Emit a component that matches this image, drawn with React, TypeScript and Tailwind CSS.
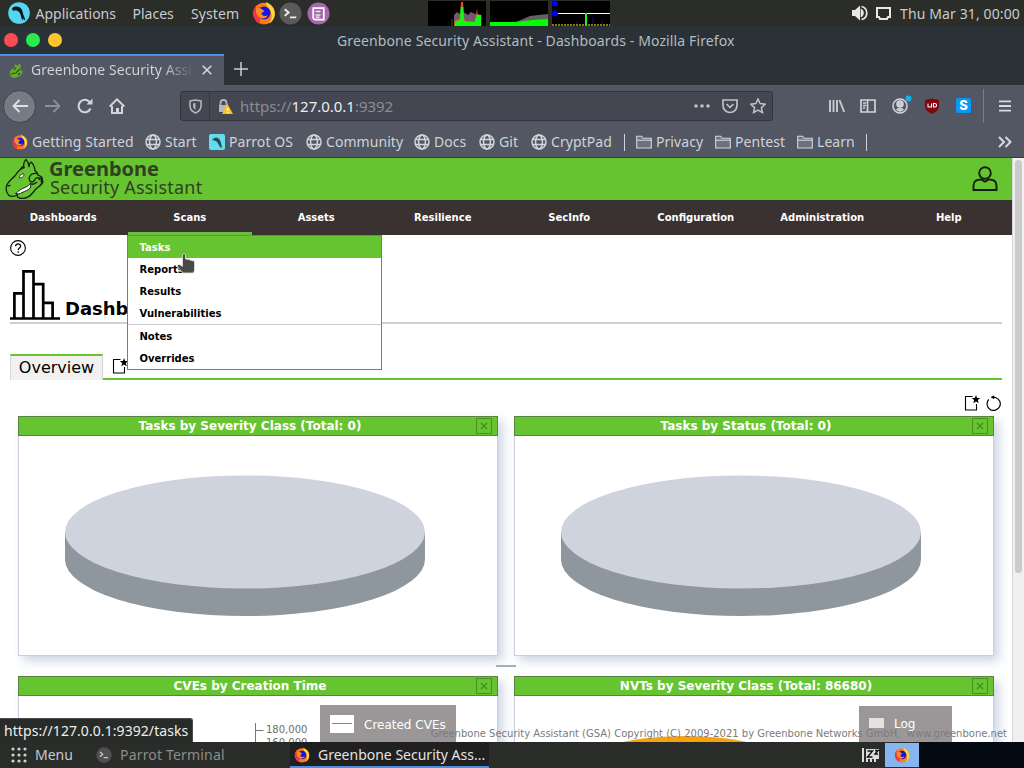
import React from "react";

type P = { className?: string };

const Firefox = ({ className }: P) => (
  <svg viewBox="0 0 24 24" className={className}>
    <circle cx="12" cy="12.500" r="10.800" fill="#ff7a1a" />
    <path d="M12 23.300A10.800 10.800 0 0 1 1.400 11c.3-3 1.300-5 2.600-6.300L4.600 8 8 5.500 8 22z" fill="#f4304a" />
    <path d="M14 1c5 2.500 9 6 8.800 12.500-.4 4-2.300 7.300-6 9 3-4 3.500-7 2.200-11-1-4-5-6-5-10.500z" fill="#ffd83a" />
    <circle cx="12" cy="12" r="6.500" fill="#1414e0" />
    <path d="M4.500 6.500 9 7.500l3.500 2.800-3 1.700c0 3 4 4 6.500 2-1.500 4.500-8.500 5-10.800 0C3.500 11.500 3.700 8.500 4.500 6.500z" fill="#ff8a1c" />
  </svg>
);

const Terminal = ({ className }: P) => (
  <svg viewBox="0 0 24 24" className={className}>
    <circle cx="12" cy="12" r="11.500" fill="#5a5a5a" />
    <path d="M6 7.500 10 11l-4 3.500M11.500 16H18" fill="none" stroke="#eee" strokeWidth="2" />
  </svg>
);

const Globe = ({ className }: P) => (
  <svg viewBox="0 0 16 16" className={className} fill="none" stroke="#d3d5da" strokeWidth="1.500">
    <circle cx="8" cy="8" r="7" />
    <ellipse cx="8" cy="8" rx="3.400" ry="7" />
    <path d="M1.500 5.500h13M1.500 10.500h13" />
  </svg>
);

const Folder = ({ className }: P) => (
  <svg viewBox="0 0 16 16" className={className} fill="none" stroke="#d3d5da" strokeWidth="1.100">
    <path d="M.7 14V2.200h5l1.300 2h8.300V14z" fill="#6c717c" />
    <path d="M.7 6.200h14.600" />
  </svg>
);

const NewDisplay = ({ className }: P) => (
  <svg viewBox="0 0 17 16" className={className} fill="none" stroke="#000" strokeWidth="1.100">
    <path d="M8.500 1.500H1.500v13.500h11V9" />
    <path d="M12 0l1.100 3 3.200.1-2.500 2 .9 3.100L12 6.400 9.300 8.200l.9-3.100-2.500-2 3.200-.1z" fill="#000" stroke="none" />
  </svg>
);

const Dragon = ({ className }: P) => (
  <svg viewBox="0 0 120 126" className={className} fill="none" stroke="#15230f" strokeWidth="4" strokeLinejoin="round" strokeLinecap="round">
    <path d="M57 29c-3-10 0-18 6-25 5 6 8 12 9 22M72 26c0-7 2-11 6-14 8 6 11 16 12 26 6 4 9 8 10 14" />
    <path d="M57 29c-12 4-20 14-25 22C22 62 9 72 5 82c-3 10-1 22 6 30 8 4 18 4 26-2" />
    <path d="M47 32l6-6M9 84l6-2" />
    <path d="M100 52c8 2 14 8 12 18-1 12-10 15-17 21-9 8-14 19-24 25-9 5-22 7-32 2-3-3-3-7-2-10" />
    <path d="M97 47c-10-2-20 2-24 11-2 8 2 13 8 14 7 0 7-9 13-12 5-2 9 1 10 5M104 60l6 2-2 8 6 2-6 8M76 77c8 4 13 2 19-4" />
    <path d="M33 106c8-10 17-13 28-18 7-3 12-8 16-12 1 6 0 10-1 14-6 7-16 9-25 14-6 3-12 6-18 2z" fill="#fff" strokeWidth="3" />
    <path d="M43 58c2-7 6-11 13-11 2 7-2 12-11 13z" fill="#fff" strokeWidth="2.500" />
  </svg>
);

const Pie = () => (
  <svg viewBox="0 0 478 219" className="block h-[219px] w-full">
    <path d="M46 97v26.500a180 56.500 0 0 0 360 0V97z" fill="#8e979d" />
    <ellipse cx="226" cy="96" rx="180" ry="56.500" fill="#ced3de" />
  </svg>
);

const Panel = ({ title, children }: { title: string; children?: React.ReactNode }) => (
  <div className="flex h-[240px] w-[480px] flex-col border border-[#c8cfdb] shadow-[5px_5px_10px_#ced5e3]">
    <div className="-mx-px -mt-px flex h-5 shrink-0 items-center border border-[#59833f] bg-[#66c430]">
      <div className="flex-1 pl-[5px] text-center text-[12px] leading-[18px] font-bold text-white">{title}</div>
      <svg viewBox="0 0 16 16" className="mr-[5px] h-4 w-4" fill="none" stroke="#46901f">
        <path d="M.5.5h15v15H.5z" />
        <path d="M5 5l6 6M11 5l-6 6" strokeWidth="1.400" />
      </svg>
    </div>
    <div className="relative min-h-0 flex-1 bg-white">{children}</div>
  </div>
);

const Bookmark = ({ w, label, icon }: { w: string; label: string; icon: React.ReactNode }) => (
  <div className={"flex shrink-0 items-center gap-1 tracking-[0.06px] " + w}>
    {icon}
    <span>{label}</span>
  </div>
);

const menus = ["Dashboards", "Scans", "Assets", "Resilience", "SecInfo", "Configuration", "Administration", "Help"];

export default function App() {
  return (
    <div className="flex h-[768px] w-[1024px] flex-col overflow-hidden bg-white font-['Noto_Sans',sans-serif] text-[14px] leading-[20px] whitespace-pre text-[#c8cbce]">
      {/* desktop panel */}
      <div className="flex h-[26px] shrink-0 items-center bg-[#2b2d29]">
        <svg viewBox="0 0 22 22" className="ml-2 h-[22px] w-[22px]">
          <circle cx="11" cy="11" r="10.800" fill="#55d5f2" />
          <path d="M4 6.500C6 4 9.500 4 12 5.500c3 2.500 2.500 5 3.500 7.500.6 2 1.500 3 1.700 5.500l-2.400-2-.3 2.500c-1.500-3.500-1.300-5.500-3-8.500C9.500 8 7 7.500 5 9z" fill="#08151c" />
        </svg>
        <span className="ml-[5px] w-[97px] pt-px pl-[0.500px]">Applications</span>
        <span className="w-[59px] pt-px pl-[0.500px]">Places</span>
        <span className="w-[61px] pt-px tracking-[0.1px]">System</span>
        <Firefox className="h-6 w-6" />
        <Terminal className="ml-[3px] h-[23px] w-[23px]" />
        <svg viewBox="0 0 24 24" className="ml-[5px] h-[23px] w-[23px]">
          <circle cx="12" cy="12" r="11.500" fill="#a767ae" />
          <path d="M6.500 6.500h11v12h-9a2 2 0 0 1-2-2z" fill="none" stroke="#fff" strokeWidth="1.800" />
          <path d="M9 10h5M9 13.500h5M9 16h4" stroke="#dff3dc" strokeWidth="1.500" />
        </svg>
        <svg viewBox="0 0 182 26" className="ml-[98px] h-[26px] w-[182px]">
          <path d="M0 1h58v25H0zM62 1h58v25H62zM124 1h58v25h-58z" fill="#000" />
          <path d="M26 26V15l3-3 3 2 2-2 3 1 3 2 3-3 4 2 3 0 1 1v11z" fill="#705a70" />
          <path d="M26 26v-5l3-2 3 1 1-18h2l1 17 2 2 3 1 1-5 1 5 4 0 2-14 1 10 3 3v5z" fill="#f04030" />
          <path d="M24 26v-7M27 26v-4l5-2 1-13h2l1 14 5 1h6l2-7h4v11z" stroke="#12fa12" strokeWidth=".5" fill="#12fa12" />
          <path d="M62 26v-4h26l14-6 18-2v12z" fill="#626262" />
          <path d="M62 26v-4h25l9-1 9-1 15-1v7z" fill="#00ff00" />
          <path d="M124 13.500h58" stroke="#fff" />
          <path d="M124 25h58" stroke="#aaa800" strokeWidth="1.500" strokeDasharray="2 1" />
          <path d="M158 26V13" stroke="#20ef20" strokeWidth="2" />
          <path d="M165 24v-7M149 24v-3M174 24v-3" stroke="#1010a0" />
          <circle cx="127" cy="3.500" r="3" fill="#0000ff" /><circle cx="127" cy="13.500" r="3" fill="#0000ff" />
        </svg>
        <svg viewBox="0 0 16 16" className="ml-[242px] h-4 w-4" fill="#e8e8e8">
          <path d="M0 5h3l5-4.500v15L3 11H0z" />
          <path d="M9.500 5c2 1.300 2 4.700 0 6zM9.500 1.500c7 1.500 7 11.500 0 13" fill="none" stroke="#e8e8e8" strokeWidth="1.700" />
        </svg>
        <svg viewBox="0 0 15 13" className="ml-2 h-[13px] w-[15px]" fill="none" stroke="#e8e8e8" strokeWidth="2"><path d="M1 1h13v9h-2l-1 2H4l-1-2H1z" /></svg>
        <span className="ml-[9px] pt-px tracking-[0.12px]">Thu Mar 31, 00:00</span>
      </div>
      {/* window title */}
      <div className="flex h-[28px] shrink-0 items-center bg-[#2a3238]">
        <div className="ml-[4px] flex w-[333px] gap-2">
          <i className="h-[14px] w-[14px] rounded-full bg-[#fc4b53]" />
          <i className="h-[14px] w-[14px] rounded-full bg-[#2bea4e]" />
          <i className="h-[14px] w-[14px] rounded-full bg-[#fec52e]" />
        </div>
        <span className="pt-px tracking-[0.125px] text-[#b5babf]">Greenbone Security Assistant - Dashboards - Mozilla Firefox</span>
      </div>
      {/* tab strip */}
      <div className="flex h-[31px] shrink-0 bg-[#2a3238]">
        <div className="flex w-[224px] items-center border-t-2 border-[#4a90e2] bg-[#525763] pb-px">
          <svg viewBox="0 0 16 16" className="ml-2 h-4 w-4"><path d="M2 12C1 9 4 7 6 6l1-4 3 2 1-3 2 3-1 3 3 3-3 4-5 2-4-1z" fill="#67a92a" /><path d="m3 12 5-1 4-4M10 13l2-2M6 8l2-3" stroke="#2c5215" strokeWidth="1.200" fill="none" /></svg>
          <span className="ml-[7px] w-[164px] overflow-hidden bg-linear-to-r from-[#d3d5d9] from-80% to-[#525763] to-100% bg-clip-text tracking-[0.06px] text-transparent">Greenbone Security Assistant</span>
          <svg viewBox="0 0 10 10" className="ml-[7px] h-[10px] w-[10px]" stroke="#d3d5da" strokeWidth="1.600"><path d="m.7.7 8.600 8.600M9.300.7.7 9.300" /></svg>
        </div>
        <svg viewBox="0 0 14 14" className="mt-2 ml-[10px] h-[14px] w-[14px]" stroke="#c9ced3" strokeWidth="1.500"><path d="M7 0v14M0 7h14" /></svg>
      </div>
      {/* navigation bar */}
      <div className="flex h-[42px] shrink-0 items-center bg-[#525763]">
        <div className="ml-[3px] flex h-[33px] w-[33px] items-center justify-center rounded-full border border-[#3f434d] bg-[#777b84]">
          <svg viewBox="0 0 16 14" className="h-[14px] w-4" fill="none" stroke="#e0e1e4" strokeWidth="1.800"><path d="M16 7H1.500M7.500 1l-6 6 6 6" /></svg>
        </div>
        <svg viewBox="0 0 16 14" className="ml-[9px] h-[14px] w-4" fill="none" stroke="#8b8f97" strokeWidth="1.800"><path d="M0 7h14.500M8.500 1l6 6-6 6" /></svg>
        <svg viewBox="0 0 16 16" className="ml-4 h-4 w-4" fill="none" stroke="#d3d5da" strokeWidth="2"><path d="M13.500 10.500A6.200 6.200 0 1 1 12.500 4" /><path d="M15.500.5v6h-6z" fill="#d3d5da" stroke="none" /></svg>
        <svg viewBox="0 0 16 16" className="ml-4 h-4 w-4" fill="none" stroke="#d3d5da" strokeWidth="2"><path d="M.7 8.500 8 1.400l7.300 7.100M3 8v7h10V8" /><path d="M7 10h3v5H7z" fill="#d3d5da" stroke="none" /></svg>
        <div className="ml-[55px] flex h-[30px] w-[593px] items-center rounded-[3px] border border-[#32353f] bg-[#444752] text-[#898c95]">
          <svg viewBox="0 0 13 15" className="ml-2 h-[15px] w-[13px]" fill="none" stroke="#b3b5bb" strokeWidth="1.600"><path d="M6.500 1 12 2v5c0 3-2 5.500-5.500 7C3 12.500 1 10 1 7V2z" /><path d="M6.500 4v7C4.500 9.500 4 8 4 6.500V4.500z" fill="#b3b5bb" stroke="none" /></svg>
          <i className="ml-[7px] h-[28px] w-px bg-[#353843]" />
          <svg viewBox="0 0 15 15" className="ml-2 h-[15px] w-[15px]"><path d="M1 6h9v7H1z" fill="#b3b5bb" /><path d="M2.500 6V4a3 3 0 0 1 6 0v2" fill="none" stroke="#b3b5bb" strokeWidth="1.800" /><path d="m9.500 5 5.500 10H4z" fill="#ffc21a" /><path d="M9.700 9v3M9.700 13v1" stroke="#fff" strokeWidth="1.300" /></svg>
          <span className="ml-[7px] w-[454px] text-[15px] tracking-[-0.02px]">https://<span className="text-[#eceef0]">127.0.0.1</span>:9392</span>
          <svg viewBox="0 0 16 4" className="h-1 w-4" fill="#c0c2c7"><circle cx="2" cy="2" r="1.800" /><circle cx="8" cy="2" r="1.800" /><circle cx="14" cy="2" r="1.800" /></svg>
          <svg viewBox="0 0 16 15" className="ml-[12px] h-[15px] w-4" fill="none" stroke="#c0c2c7" strokeWidth="1.700"><path d="M1 1h14v5c0 10-14 10-14 0zM4.500 5 8 8.300 11.500 5" /></svg>
          <svg viewBox="0 0 16 16" className="ml-[12px] h-4 w-4" fill="none" stroke="#c0c2c7" strokeWidth="1.500"><path d="m8 1 2.100 4.600 5 .6-3.700 3.400 1 4.900L8 12l-4.400 2.500 1-4.900L.9 6.200l5-.6z" /></svg>
        </div>
        <svg viewBox="0 0 16 16" className="ml-[56px] h-4 w-4 shrink-0" fill="none" stroke="#c8cacf" strokeWidth="1.900"><path d="M1 2v12M4.500 2v12M8 2v12M10.500 2l4.700 12" /></svg>
        <svg viewBox="0 0 16 14" className="ml-[15px] h-[14px] w-4 shrink-0" fill="none" stroke="#d3d5da" strokeWidth="1.700"><path d="M1 1h14v12H1zM7.500 1v12M3 4h3M3 6.500h3M3 9h2" /></svg>
        <svg viewBox="0 0 20 19" className="-mt-[3px] ml-4 h-[19px] w-5 shrink-0" fill="none" stroke="#d3d5da" strokeWidth="1.500"><circle cx="8" cy="11" r="7" /><circle cx="8" cy="9" r="3" fill="#c8cacf" /><path d="M4 15c1-3 7-3 8 0l-4 2z" fill="#c8cacf" stroke="none" /><circle cx="16.500" cy="3.500" r="3" fill="#12b2e8" stroke="none" /></svg>
        <svg viewBox="0 0 16 16" className="ml-3 h-4 w-4 shrink-0"><path d="M8 .5 15 2v6c0 4-3 6-7 8-4-2-7-4-7-8V2z" fill="#800610" /><path d="M4 5.500V9h3.500V5.500M9.500 5.500h1.300a1.700 1.700 0 0 1 0 3.500H9.500z" fill="none" stroke="#fff" strokeWidth="1.100" /></svg>
        <div className="-mt-px ml-4 flex h-[15px] w-[15px] shrink-0 items-center justify-center rounded-[2px] bg-[#0797f5] font-['Inter',sans-serif] text-[13px] leading-none font-extrabold text-white shadow-[1px_1px_0_#0766ba]">S</div>
        <i className="ml-[12px] h-[34px] w-px shrink-0 bg-[#7a7e87]" />
        <svg viewBox="0 0 13 12" className="ml-[15px] h-3 w-[12px] shrink-0" stroke="#d9dade" strokeWidth="2"><path d="M0 1h13M0 6h13M0 11h13" /></svg>
      </div>
      {/* bookmarks */}
      <div className="flex h-[31px] shrink-0 items-center border-b border-[#303a45] bg-[#525763] pl-[12px] text-[#d0d3d7]">
        <Bookmark w="w-[133px]" label="Getting Started" icon={<Firefox className="h-4 w-4" />} />
        <Bookmark w="w-[64px]" label="Start" icon={<Globe className="h-4 w-4" />} />
        <Bookmark w="w-[97px]" label="Parrot OS" icon={<svg viewBox="0 0 16 16" className="h-4 w-4"><rect width="16" height="16" rx="2" fill="#63dcec" /><path d="M3 6c4-5 8-2 9 3l1 5c-3-1-3-4-5-6-1-1-3-2-5-2z" fill="#234a58" /></svg>} />
        <Bookmark w="w-[108px]" label="Community" icon={<Globe className="h-4 w-4" />} />
        <Bookmark w="w-[65px]" label="Docs" icon={<Globe className="h-4 w-4" />} />
        <Bookmark w="w-[52px]" label="Git" icon={<Globe className="h-4 w-4" />} />
        <Bookmark w="w-[93px]" label="CryptPad" icon={<Globe className="h-4 w-4" />} />
        <i className="h-[17px] w-px bg-[#d0d3d7]" />
        <i className="w-[11px]" />
        <Bookmark w="w-[79px]" label="Privacy" icon={<Folder className="h-4 w-4" />} />
        <Bookmark w="w-[82px]" label="Pentest" icon={<Folder className="h-4 w-4" />} />
        <Bookmark w="w-[69px]" label="Learn" icon={<Folder className="h-4 w-4" />} />
        <i className="h-[17px] w-px bg-[#d0d3d7]" />
        <svg viewBox="0 0 14 12" className="ml-[131px] h-3 w-[14px]" fill="none" stroke="#d9dade" strokeWidth="2"><path d="m1 1 5 5-5 5M7.500 1l5 5-5 5" /></svg>
      </div>
      {/* page */}
      <div className="flex h-[584px] shrink-0 font-['DejaVu_Sans',sans-serif] text-black">
        <div className="relative flex w-[1012px] flex-col overflow-hidden bg-white">
          <div className="flex h-[42px] shrink-0 bg-[#66c430]">
            <Dragon className="ml-[5px] h-[42px] w-10" />
            <div className="ml-[4px] flex w-[200px] flex-col font-['Noto_Sans',sans-serif] text-[#304024]">
              <span className="h-[21px] text-[20px] leading-[21px] font-bold">Greenbone</span>
              <span className="-mt-[2px] pl-px text-[18px] leading-[21px] tracking-[0.22px]">Security Assistant</span>
            </div>
            <svg viewBox="0 0 26 25" className="mt-[8px] ml-[723px] h-[25px] w-[26px] shrink-0" fill="none" stroke="#10200a" strokeWidth="1.900"><circle cx="13" cy="7" r="5.800" /><path d="M1.500 24v-4.500c0-4 2.500-6 7.500-6 1.500 0 2.500 2 4 2s2.500-2 4-2c5 0 7.500 2 7.500 6V24z" /></svg>
          </div>
          <div className="grid h-[35px] shrink-0 grid-cols-8 bg-[#393231] text-center text-[10px] leading-[35px] font-bold text-white">
            {menus.map((m) => (
              <span key={m}>{m}</span>
            ))}
          </div>
          <div className="mx-[10px] flex h-[89px] shrink-0 flex-col border-b-2 border-[#cfcfcf] pt-[5px]">
            <svg viewBox="0 0 16 16" className="h-4 w-4 shrink-0" fill="none" stroke="#000" strokeWidth="1.100"><circle cx="8" cy="8" r="7.400" /><path d="M5.600 6.200c0-3.200 5-3.200 5 0 0 1.700-2.400 1.800-2.400 3.800M8.200 11.300v1.400" strokeWidth="1.300" /></svg>
            <div className="mt-[14px] flex h-[50px]">
              <svg viewBox="0 0 50 50" className="h-[50px] w-[50px]" fill="none" stroke="#000" strokeWidth="2.700"><path d="M0 48.500h50M4.400 48V23.300H13.500M13.500 48V1.400h10V48M23.500 14.200h9.700V48M33.200 32.800h9.400V48" /></svg>
              <span className="mt-[29px] ml-[5px] text-[18px] font-bold">Dashboards</span>
            </div>
          </div>
          <div className="mx-[10px] mt-[30px] flex h-[26px] shrink-0">
            <div className="w-[93px] border-x border-t-2 border-x-[#d5d5d5] border-t-[#66c430] bg-[#f1f1f1] text-center text-[16px] leading-[23px]">Overview</div>
            <div className="flex-1 border-b-2 border-[#66c430] pt-[4px] pl-[9px]"><NewDisplay className="h-4 w-[17px]" /></div>
          </div>
          <div className="flex h-[36px] shrink-0 justify-end pt-[15px] pr-[10px]">
            <NewDisplay className="h-4 w-[17px]" />
            <svg viewBox="0 0 16 16" className="ml-[5px] h-4 w-4" fill="none" stroke="#000" strokeWidth="1.200"><path d="M2.700 4.500A6.600 6.600 0 1 0 9.500 2.500L6 2.200" /><path d="M5 2.200 8 .7v3z" fill="#000" strokeWidth=".5" /></svg>
          </div>
          <div className="flex shrink-0 gap-4 pl-[18px]">
            <Panel title="Tasks by Severity Class (Total: 0)"><Pie /></Panel>
            <Panel title="Tasks by Status (Total: 0)"><Pie /></Panel>
          </div>
          <div className="flex h-5 shrink-0 pt-[9px] pl-[496px]"><i className="h-[2px] w-5 bg-[#a9adb4]" /></div>
          <div className="flex shrink-0 gap-4 pl-[18px]">
            <Panel title="CVEs by Creation Time">
              <svg viewBox="0 0 100 60" className="absolute top-[26px] left-[236px] h-[60px] w-[100px]" fill="none" stroke="#777"><path d="M.5 1v59M.5 8.500h8M.5 22.500h8" /></svg>
              <div className="absolute top-[27px] left-[247px] text-[10px] leading-[13px] text-[#6e6e6e]">180,000<br />160,000</div>
              <div className="absolute top-[9px] left-[301px] flex h-[60px] w-[136px] bg-[#9b9798] pt-[10px] pl-[10px] text-[12px] leading-[20px] text-white">
                <i className="mr-[10px] flex h-[18px] w-6 items-center bg-white"><i className="mx-[2px] -mt-px h-px w-full bg-[#83867c]" /></i>Created CVEs
              </div>
            </Panel>
            <Panel title="NVTs by Severity Class (Total: 86680)">
              <svg viewBox="0 0 240 60" className="absolute top-[40px] left-[80px] h-[60px] w-[240px]"><ellipse cx="90" cy="22" rx="90" ry="22" fill="#f9a10a" /></svg>
              <div className="absolute top-[10px] left-[344px] flex h-[60px] w-[93px] bg-[#9b9798] pt-[8px] pl-[10px] text-[12px] leading-[20px] text-white">
                <i className="mt-1 mr-[10px] h-[10px] w-[15px] bg-[#e2e2e2]" />Log
              </div>
            </Panel>
          </div>
          {/* open Scans menu */}
          <div className="absolute top-[74px] left-[128px] h-[3px] w-[124px] bg-[#6abb3e]" />
          <div className="absolute top-[77px] left-[127px] flex h-[135px] w-[255px] flex-col border border-[#777d80] bg-white text-[10px] leading-[20px] font-bold">
            <span className="bg-[#66c430] pt-[2px] pl-[11.500px] text-white">Tasks</span>
            <span className="pt-[2px] pl-[11.500px]">Reports</span>
            <span className="pt-[2px] pl-[11.500px]">Results</span>
            <span className="border-b border-[#ccc] pt-[2px] pl-[11.500px]">Vulnerabilities</span>
            <span className="pt-[2px] pl-[11.500px]">Notes</span>
            <span className="pt-[2px] pl-[11.500px]">Overrides</span>
          </div>
          <svg viewBox="0 0 20 22" className="absolute top-[95px] left-[176px] h-[22px] w-5"><path d="M6.500 1.500Q8 0 9.500 1.500V6l2 .3 2 .5 2 .6 3 .8v9l-1 2.800H7L1 13c1-2 3-1.800 5.500.5z" fill="#484848" stroke="#dfe4dc" strokeWidth=".8" /></svg>
          <div className="absolute right-[5px] bottom-0 h-[17px] text-[10px] leading-[18px] text-[#7b7b7b]">Greenbone Security Assistant (GSA) Copyright (C) 2009-2021 by Greenbone Networks GmbH,  www.greenbone.net</div>
          <div className="absolute bottom-0 left-0 h-[24px] w-[193px] rounded-tr-[3px] border-t border-r border-[#4a4c49] bg-[#292b29] pl-1 font-['Noto_Sans',sans-serif] text-[14px] leading-[23px] tracking-[0.07px] text-[#eeeeec]">https://127.0.0.1:9392/tasks</div>
        </div>
        <div className="w-3 border-l border-[#d8d8d8] bg-[#f0f0f0] px-[2px] pt-[2px]"><div className="h-[413px] w-[7px] rounded-full bg-[#cbcbcd]" /></div>
      </div>
      {/* taskbar */}
      <div className="flex h-[26px] shrink-0 items-center bg-[#292c29]">
        <svg viewBox="0 0 16 16" className="ml-[11px] h-4 w-4" fill="#d0d0d0">
          {[2, 8, 14].map((y) => [2, 8, 14].map((x) => <circle key={x + "-" + y} cx={x} cy={y} r="1.600" />))}
        </svg>
        <span className="ml-2 w-[61px]">Menu</span>
        <Terminal className="h-4 w-4 opacity-80" />
        <span className="ml-2 w-[170px] tracking-[0.18px] text-[#8c8e8c]">Parrot Terminal</span>
        <div className="flex h-[26px] w-[199px] items-center border-b-2 border-[#4a90e2] bg-[#1f201f] pt-[2px] text-[#e3e3e3]">
          <Firefox className="ml-1 h-4 w-4" />
          <span className="ml-2">Greenbone Security Ass...</span>
        </div>
        <svg viewBox="0 0 17 16" className="ml-[373px] h-4 w-[17px]"><path d="M0 1h2v14H0zM4 2h13v10H4zM4 11h2v4H4zM8 11h2v4H8zM12 11h2v4h-2z" fill="#dcdcdc" /><path d="M5.500 4h5l-5 6h5M13 3.500h3l-3 3.500h3" fill="none" stroke="#111" strokeWidth="1.400" /></svg>
        <div className="ml-[6px] flex h-6 w-[34px] items-center justify-center bg-[#86b6f2]"><Firefox className="h-4 w-4" /></div>
        <div className="h-[26px] flex-1 bg-[#040a12]" />
      </div>
    </div>
  );
}
